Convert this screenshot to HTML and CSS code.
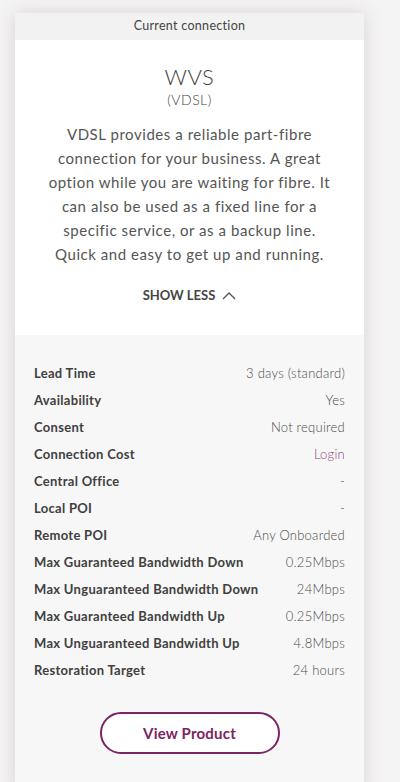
FILE: index.html
```html
<!DOCTYPE html>
<html lang="en">
<head>
<meta charset="utf-8">
<link rel="stylesheet" href="styles.css">
</head>
<body>
<div class="card">
  <div class="card-head">Current connection</div>
  <div class="intro">
    <h1 class="title">WVS</h1>
    <div class="subtitle">(VDSL)</div>
    <p class="desc">VDSL provides a reliable part-fibre connection for your business. A great option while you are waiting for fibre. It can also be used as a fixed line for a specific service, or as a backup line. Quick and easy to get up and running.</p>
    <div class="toggle">SHOW LESS
      <svg class="chev" width="14" height="9" viewBox="0 0 14 9"><path d="M1 8 L7 2 L13 8" fill="none" stroke="#555" stroke-width="1.4"/></svg>
    </div>
  </div>
  <div class="details">
    <dl class="specs">
      <div class="row"><dt>Lead Time</dt><dd>3 days (standard)</dd></div>
      <div class="row"><dt>Availability</dt><dd>Yes</dd></div>
      <div class="row"><dt>Consent</dt><dd>Not required</dd></div>
      <div class="row"><dt>Connection Cost</dt><dd class="link">Login</dd></div>
      <div class="row"><dt>Central Office</dt><dd>-</dd></div>
      <div class="row"><dt>Local POI</dt><dd>-</dd></div>
      <div class="row"><dt>Remote POI</dt><dd>Any Onboarded</dd></div>
      <div class="row"><dt>Max Guaranteed Bandwidth Down</dt><dd>0.25Mbps</dd></div>
      <div class="row"><dt>Max Unguaranteed Bandwidth Down</dt><dd>24Mbps</dd></div>
      <div class="row"><dt>Max Guaranteed Bandwidth Up</dt><dd>0.25Mbps</dd></div>
      <div class="row"><dt>Max Unguaranteed Bandwidth Up</dt><dd>4.8Mbps</dd></div>
      <div class="row"><dt>Restoration Target</dt><dd>24 hours</dd></div>
    </dl>
    <div class="actions"><button class="btn">View Product</button></div>
  </div>
</div>
</body>
</html>
```

FILE: styles.css
```css
html, body {
  margin: 0;
  padding: 0;
}
body {
  background: #f5f4f4;
  font-family: Lato, "Open Sans", sans-serif;
  color: #555;
  height: 782px;
  overflow: hidden;
}
.card {
  margin: 13px 0 0 15px;
  width: 349px;
  background: #f7f7f7;
  box-shadow: 0 0 18px rgba(90, 70, 60, 0.18);
}
.card-head {
  height: 27px;
  background: #f2f2f2;
  text-align: center;
  font-size: 12.5px;
  line-height: 25px;
  color: #444;
  letter-spacing: 0.3px;
}
.intro {
  background: #fff;
  text-align: center;
  padding: 24px 28px 32px;
}
.title {
  margin: 0;
  font-size: 22px;
  font-weight: 300;
  line-height: 26px;
  color: #444;
  letter-spacing: 0.5px;
}
.subtitle {
  font-size: 14px;
  font-weight: 300;
  line-height: 20px;
  color: #444;
  letter-spacing: 0.5px;
}
.desc {
  margin: 12px 0 0;
  font-size: 15px;
  line-height: 24px;
  color: #555;
  letter-spacing: 0.55px;
}
.toggle {
  margin-top: 21px;
  font-size: 13px;
  font-weight: 700;
  color: #444;
  display: flex;
  justify-content: center;
  align-items: center;
  gap: 7px;
}
.details {
  padding: 24px 19px 40px;
}
.specs {
  margin: 0;
  display: flex;
  flex-direction: column;
}
.row {
  display: flex;
  justify-content: space-between;
  align-items: center;
  height: 27px;
  font-size: 13px;
}
.row dt {
  font-weight: 700;
  color: #404040;
  letter-spacing: 0.3px;
}
.row dd {
  margin: 0;
  font-weight: 300;
  color: #4a4a4a;
  letter-spacing: 0.25px;
}
.row dd.link {
  color: #94377c;
}
.actions {
  display: flex;
  justify-content: center;
  margin-top: 29px;
}
.btn {
  width: 180px;
  height: 42px;
  border: 2px solid #7c2361;
  border-radius: 21px;
  background: #fff;
  color: #7c2361;
  font-family: Lato, sans-serif;
  font-size: 15px;
  font-weight: 700;
  letter-spacing: 0.2px;
}
```
